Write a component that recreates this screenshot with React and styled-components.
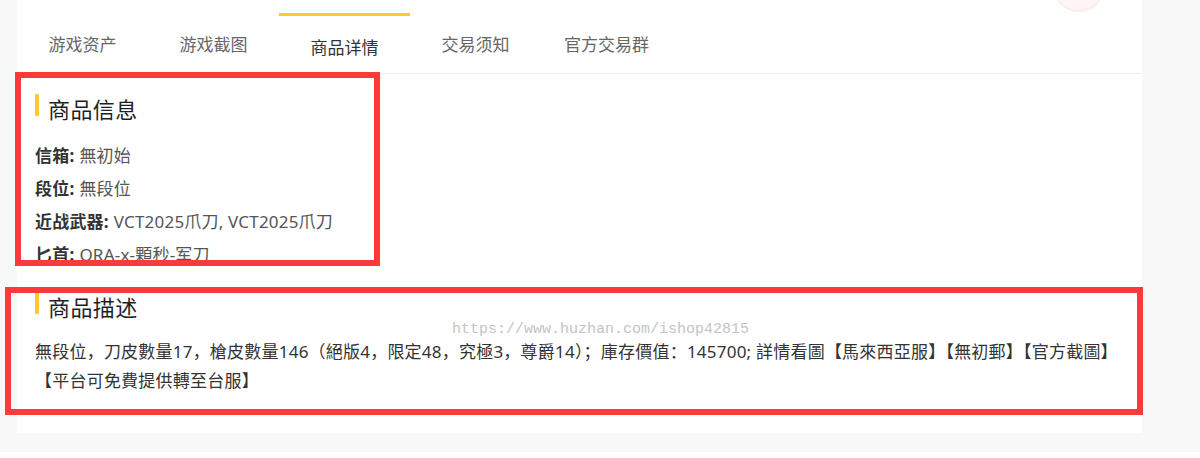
import React from "react";
import styled, { createGlobalStyle } from "styled-components";

const Global = createGlobalStyle`
  html, body { margin: 0; padding: 0; background: #ffffff; }
  body { font-family: "Noto Sans", "Noto Sans CJK SC", sans-serif; }
  * { box-sizing: border-box; }
`;

const Page = styled.div`
  position: relative;
  width: 1200px;
  height: 452px;
  background: #f8f8f8;
  padding: 0 58px 0 17px;
`;

const Card = styled.div`
  position: relative;
  height: 433px;
  background: #ffffff;
  overflow: hidden;
  padding-top: 13px;
`;

const Badge = styled.div`
  position: absolute;
  left: 1036px;
  top: -40px;
  width: 52px;
  height: 52px;
  border-radius: 50%;
  background: #fff5f5;
  border: 2px solid #fdeded;
`;

const TabBar = styled.div`
  display: flex;
  height: 61px;
  border-bottom: 1px solid #eeeeee;
`;

const Tab = styled.div`
  width: 131px;
  display: flex;
  align-items: center;
  justify-content: center;
  font-family: "Noto Sans CJK SC", sans-serif;
  font-size: 17px;
  color: ${(p) => (p.$active ? "#333333" : "#666666")};
  border-top: 3px solid ${(p) => (p.$active ? "#fcc934" : "transparent")};
  padding-top: ${(p) => (p.$active ? "3px" : "0")};
  padding-bottom: ${(p) => (p.$active ? "0" : "3px")};
  cursor: pointer;
`;

const Content = styled.div`
  display: flex;
  flex-direction: column;
  gap: 28px;
  padding: 19px 18px 0;
`;

const Section = styled.section`
  display: flex;
  flex-direction: column;
  gap: 16px;
`;

const Heading = styled.h3`
  display: flex;
  align-items: flex-start;
  gap: 9px;
  margin: 0;
  font-family: "Noto Sans CJK SC", sans-serif;
  font-weight: 400;
  font-size: 22px;
  letter-spacing: 0.4px;
  line-height: 30px;
  height: 30px;
  color: #1f1f1f;
`;

const HeadBar = styled.span`
  width: 4px;
  height: 22px;
  margin-top: 1px;
  background: #fcc934;
  border-radius: 1px;
`;

const InfoList = styled.div`
  display: flex;
  flex-direction: column;
  max-height: 124px;
  overflow: hidden;
`;

const InfoRow = styled.div`
  font-size: 17px;
  line-height: 33px;
  letter-spacing: 0.2px;
  color: #555555;
  white-space: nowrap;
`;

const Label = styled.b`
  font-weight: 700;
  color: #333333;
  margin-right: 5px;
`;

const Desc = styled.p`
  margin: 0;
  font-size: 17px;
  line-height: 29px;
  letter-spacing: 0.22px;
  color: #333333;
  max-width: 1084px;
`;

const Watermark = styled.div`
  position: absolute;
  left: 452px;
  top: 320px;
  font-family: "Liberation Mono", "DejaVu Sans Mono", monospace;
  font-size: 15px;
  line-height: 20px;
  color: #c4c4c4;
  pointer-events: none;
`;

const Mark = styled.div`
  position: absolute;
  left: ${(p) => p.$x}px;
  top: ${(p) => p.$y}px;
  width: ${(p) => p.$w}px;
  height: ${(p) => p.$h}px;
  border: 6px solid #fd3a3a;
  pointer-events: none;
`;

const tabs = ["游戏资产", "游戏截图", "商品详情", "交易须知", "官方交易群"];

const info = [
  ["信箱:", "無初始"],
  ["段位:", "無段位"],
  ["近战武器:", "VCT2025爪刀, VCT2025爪刀"],
  ["匕首:", "ORA-x-顆秒-军刀"],
];

export default function App() {
  return (
    <>
      <Global />
      <Page>
        <Card>
          <Badge />
          <TabBar>
            {tabs.map((t, i) => (
              <Tab key={t} $active={i === 2}>
                {t}
              </Tab>
            ))}
          </TabBar>
          <Content>
            <Section>
              <Heading>
                <HeadBar />
                商品信息
              </Heading>
              <InfoList>
                {info.map(([k, v]) => (
                  <InfoRow key={k}>
                    <Label>{k}</Label>
                    {v}
                  </InfoRow>
                ))}
              </InfoList>
            </Section>
            <Section>
              <Heading>
                <HeadBar />
                商品描述
              </Heading>
              <Desc>
                無段位，刀皮數量17，槍皮數量146（絕版4，限定48，究極3，尊爵14）；庫存價值：145700; 詳情看圖【馬來西亞服】【無初郵】【官方截圖】【平台可免費提供轉至台服】
              </Desc>
            </Section>
          </Content>
        </Card>
        <Watermark>https://www.huzhan.com/ishop42815</Watermark>
        <Mark $x={15} $y={72} $w={365} $h={194} />
        <Mark $x={5} $y={287} $w={1138} $h={128} />
      </Page>
    </>
  );
}
